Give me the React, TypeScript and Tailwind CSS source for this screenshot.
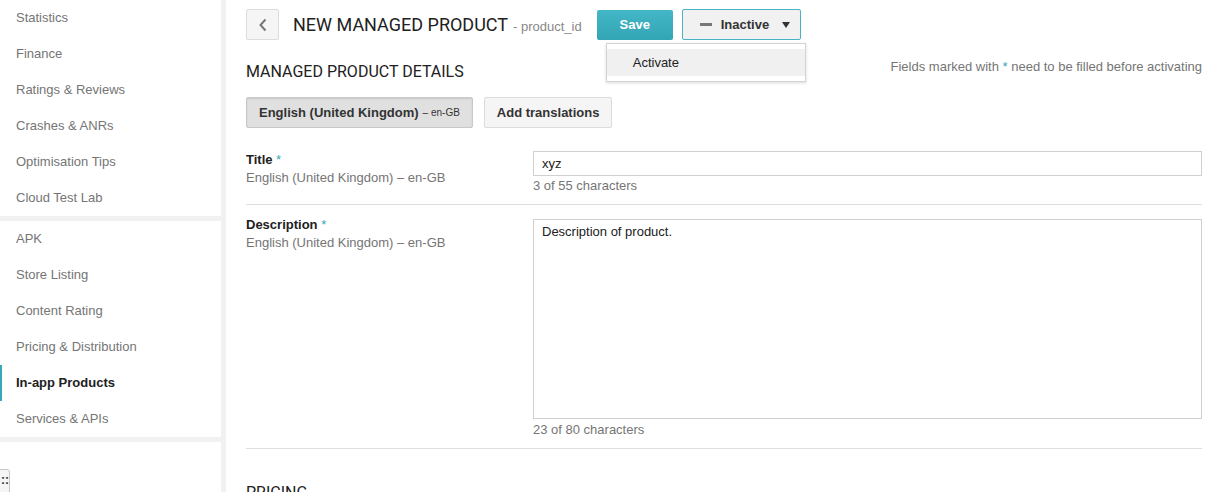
import React from "react";

const font = { fontFamily: '"Liberation Sans", Arial, sans-serif' };
const headFont = { fontFamily: 'Roboto, "Liberation Sans", Arial, sans-serif' };

function NavItem({ label, active }: { label: string; active?: boolean }) {
  return (
    <div
      className={
        "h-9 flex items-center text-[13px] " +
        (active ? "font-bold text-[#212121] border-l-2 border-[#3aa8b8] pl-[14px]" : "pl-4 text-[#757575]")
      }
    >
      {label}
    </div>
  );
}

export default function App() {
  return (
    <div style={font} className="w-[1219px] h-[492px] overflow-hidden flex bg-white relative">
      {/* Sidebar */}
      <div className="w-[221px] shrink-0 flex flex-col bg-[#f1f1f1]">
        <div className="bg-white">
          <NavItem label="Statistics" />
          <NavItem label="Finance" />
          <NavItem label="Ratings & Reviews" />
          <NavItem label="Crashes & ANRs" />
          <NavItem label="Optimisation Tips" />
          <NavItem label="Cloud Test Lab" />
        </div>
        <div className="h-[5px]" />
        <div className="bg-white">
          <NavItem label="APK" />
          <NavItem label="Store Listing" />
          <NavItem label="Content Rating" />
          <NavItem label="Pricing & Distribution" />
          <NavItem label="In-app Products" active />
          <NavItem label="Services & APIs" />
        </div>
        <div className="h-[5px]" />
        <div className="bg-white flex-1 relative">
          <div className="absolute left-[-2px] top-[27px] w-[12px] h-[30px] border border-[#c8c8c8] rounded-[3px] bg-[#f5f5f5] text-[12px] font-bold text-[#333] flex items-start pt-[4px] pl-[2px] leading-none">
            ::
          </div>
        </div>
      </div>
      <div className="w-[5px] shrink-0 bg-[#f1f1f1]" />

      {/* Main */}
      <div className="flex-1 pl-5 pr-[17px] relative">
        {/* Header */}
        <div className="flex items-center h-[31px] mt-[9px]">
          <button className="w-[33px] h-[31px] border border-[#dcdcdc] rounded-[2px] bg-[#f5f5f5] flex items-center justify-center">
            <svg width="10" height="14" viewBox="0 0 10 14">
              <path d="M7.5 1.5 L2.5 7 L7.5 12.5" fill="none" stroke="#777" strokeWidth="2" />
            </svg>
          </button>
          <div className="ml-[14px] flex items-baseline">
            <span style={headFont} className="text-[18px] text-[#212121]">NEW MANAGED PRODUCT</span>
            <span className="text-[13px] text-[#888] ml-[5px]">- product_id</span>
          </div>
          <button className="ml-[15px] w-[76px] h-[30px] rounded-[2px] bg-gradient-to-b from-[#43b7c7] to-[#33a5b5] text-white font-bold text-[13px] flex items-center justify-center">
            Save
          </button>
          <div className="relative ml-[9px]">
            <button className="w-[119px] h-[31px] rounded-[2px] border border-[#48b3c2] bg-[#f1f1f1] flex items-center pl-[17px] text-[13px] font-bold text-[#333]">
              <span className="w-[12px] h-[3px] bg-[#777] mr-[9px]" />
              Inactive
              <svg className="ml-[13px]" width="8" height="6" viewBox="0 0 8 6">
                <path d="M0 0 H8 L4 6 Z" fill="#333" />
              </svg>
            </button>
            <div className="absolute left-[-76px] top-[34px] w-[200px] h-[39px] bg-white border border-[#d4d4d4] shadow-[0_1px_3px_rgba(0,0,0,0.15)] pt-[5px] z-10">
              <div className="h-[27px] bg-[#f0f0f0] pl-[26px] flex items-center text-[13px] text-[#212121]">Activate</div>
            </div>
          </div>
        </div>

        {/* Section header */}
        <div className="flex items-center justify-between mt-[22px] h-[20px]">
          <div style={headFont} className="text-[16px] text-[#212121]">MANAGED PRODUCT DETAILS</div>
          <div className="text-[13px] text-[#757575] -mt-[11px]">
            Fields marked with <span className="text-[#3aa8b8]">*</span> need to be filled before activating
          </div>
        </div>

        {/* Language tabs */}
        <div className="flex mt-[15px] gap-[11px]">
          <div className="h-[31px] px-[12px] border border-[#c8c8c8] bg-[#e0e0e0] rounded-[2px] flex items-center text-[13px] font-bold text-[#333] shadow-[inset_0_1px_2px_rgba(0,0,0,0.1)]">
            English (United Kingdom)
            <span className="font-normal text-[10px] ml-[4px]">– en-GB</span>
          </div>
          <div className="h-[31px] px-[12px] border border-[#dcdcdc] bg-[#f5f5f5] rounded-[2px] flex items-center text-[13px] font-bold text-[#333]">
            Add translations
          </div>
        </div>

        {/* Title row */}
        <div className="flex mt-[23px] border-b border-[#dedede] pb-[11px]">
          <div className="w-[287px] pt-[1px]">
            <div className="text-[13px] font-bold text-[#212121] leading-[15px]">
              Title <span className="text-[#3aa8b8] font-normal">*</span>
            </div>
            <div className="text-[13px] text-[#757575] leading-[15px] mt-[3px]">English (United Kingdom) – en-GB</div>
          </div>
          <div className="flex-1">
            <div className="h-[25px] border border-[#d0d0d0] flex items-center pl-[8px] text-[13px] text-[#212121]">xyz</div>
            <div className="text-[13px] text-[#757575] mt-[2px] leading-[15px]">3 of 55 characters</div>
          </div>
        </div>

        {/* Description row */}
        <div className="flex mt-[14px] border-b border-[#dedede] pb-[11px]">
          <div className="w-[287px]">
            <div className="text-[13px] font-bold text-[#212121] leading-[15px] -mt-[2px]">
              Description <span className="text-[#3aa8b8] font-normal">*</span>
            </div>
            <div className="text-[13px] text-[#757575] leading-[15px] mt-[3px]">English (United Kingdom) – en-GB</div>
          </div>
          <div className="flex-1">
            <div className="h-[200px] border border-[#d0d0d0] pl-[8px] pt-[2px] text-[13px] text-[#212121]">
              Description of product.
            </div>
            <div className="text-[13px] text-[#757575] mt-[3px] leading-[15px]">23 of 80 characters</div>
          </div>
        </div>

        <div style={headFont} className="mt-[32px] text-[16px] text-[#212121]">PRICING</div>
      </div>
    </div>
  );
}
